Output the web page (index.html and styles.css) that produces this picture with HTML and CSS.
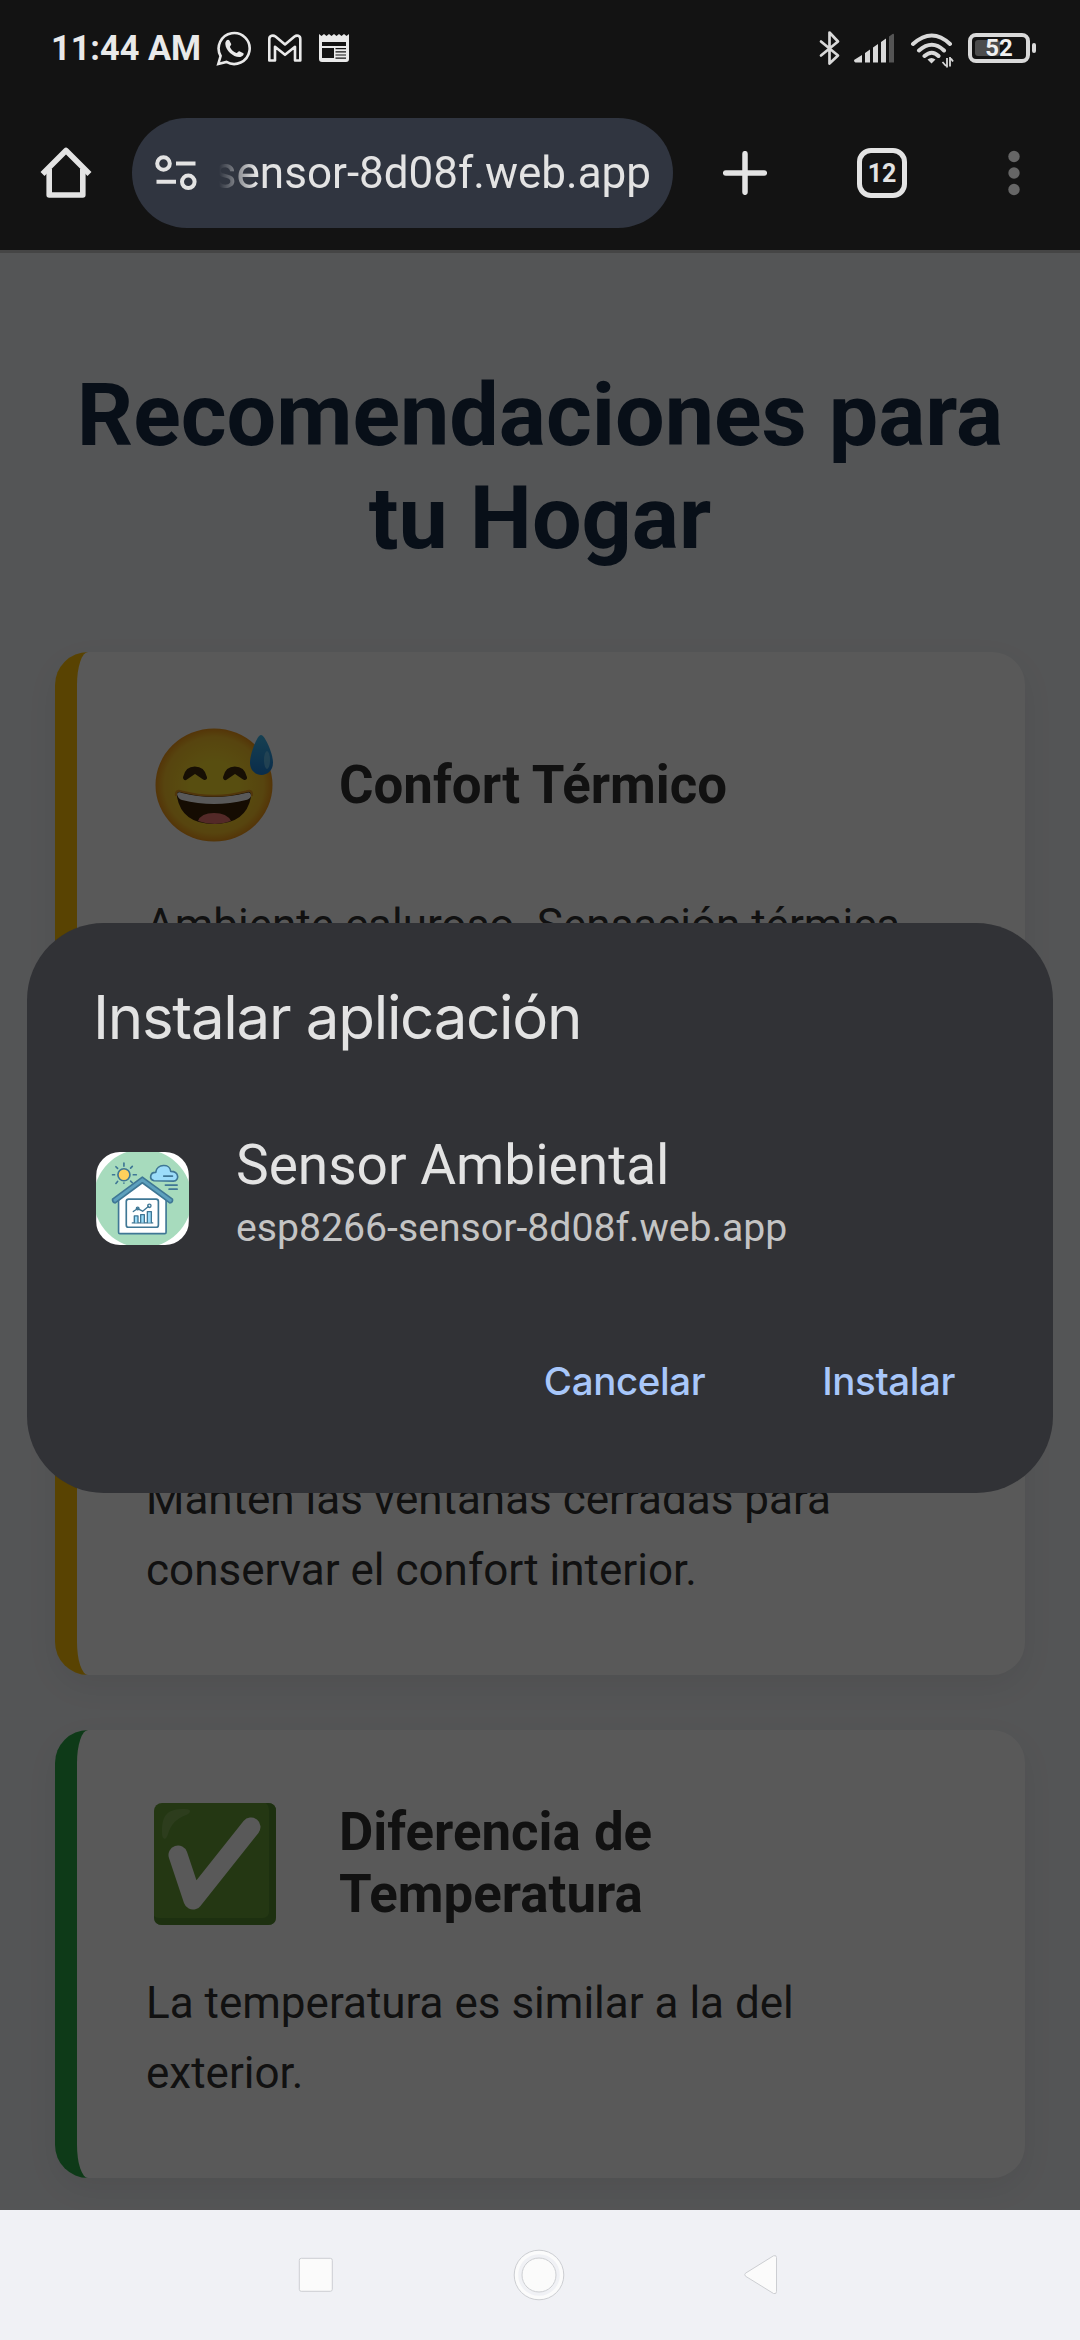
FILE: index.html
```html
<!DOCTYPE html>
<html lang="es">
<head>
<meta charset="utf-8">
<title>Sensor Ambiental</title>
<link rel="stylesheet" href="styles.css">
</head>
<body>
<header class="status-bar">
  <div class="status-left">
    <span class="clock">11:44 AM</span>
    <svg class="whatsapp" width="36" height="36" viewBox="0 0 36 36" fill="none" stroke="#e9e9e9" stroke-width="2.6"><path d="M2.3 34 4.6 26A15.5 15.5 0 1 1 10.4 31.9Z"/><path d="M9.3 14c-.4-3 2.6-5.5 3.9-3.800l2 3.800c.4 1-1.300 2-1.300 3 1.300 3 3.700 5 6.500 6 1 .200 2-2 3-1.700l4 2c1 1-.7 3.700-4.200 3.800C17 27 9.700 20.500 9.300 14Z" fill="#e9e9e9" stroke="none"/></svg>
    <svg class="gmail" width="36" height="28" viewBox="0 0 36 28" fill="none" stroke="#e9e9e9" stroke-width="2.600" stroke-linejoin="round"><path d="M3 26.500h5V12.800l10 8 10-8v13.700h5.300V5c0-3.500-3.500-4.200-5.800-2.500L18 10.500 8.500 2.500C6.200.8 2.300 1.500 2.300 5v21.500Z"/></svg>
    <svg class="news" width="30" height="28" viewBox="0 0 30 28"><path fill="#e9e9e9" fill-rule="evenodd" d="M0 0 2.500 2 5 0 7.500 2 10 0l2.500 2L15 0l2.500 2L20 0l2.500 2L25 0l2.500 2L30 0v25q0 3-3 3H3q-3 0-3-3ZM3 8v4h24V8ZM3 14v10h12V14ZM16.500 14v1.200H27V14Zm0 3.200v1.200H27v-1.200Zm0 3.200v1.200H27v-1.200Zm0 3.200v1.200H27v-1.200Z"/></svg>
  </div>
  <div class="status-right">
    <svg width="22" height="36" viewBox="0 0 22 36" fill="none" stroke="#d9d9d9" stroke-width="2.700" stroke-linecap="round" stroke-linejoin="round"><path d="M2 11.500 19 25.500 10.500 33.500V2.500L19 11.500 2 25.500"/></svg>
    <svg class="signal" width="41" height="30" viewBox="0 0 41 30" fill="#d9d9d9"><path d="M0 27 8 22v7.500H1.500Q0 29 0 27ZM11 20l5-3.500v13h-5ZM19 14.500l5-3.500v18.500h-5ZM27 9l5-3.500v24h-5Z"/><path fill="#555" d="M35 3.500 38.500 1Q40 0 40 2v27.500h-5Z"/></svg>
    <svg class="wifi" width="44" height="36" viewBox="0 0 44 36" fill="none" stroke="#d9d9d9" stroke-width="4" stroke-linecap="round"><path d="M3 12Q22-5 40 12M9 18.500Q22 7 34 18.500M14.500 24Q22 17.500 28.500 24"/><path d="M17.500 27.500Q21.500 24.500 25.500 27.500L21.500 31.500Z" fill="#d9d9d9" stroke="none"/><path d="M37 26v9.500M36 34l-3.500-4M40 25v9.500M41 26.500l2 3" stroke-width="1.800" stroke-linecap="butt"/></svg>
    <div class="battery"><div class="battery-body"><span class="battery-fill"></span><span class="battery-text">52</span></div><span class="battery-tip"></span></div>
  </div>
</header>
<nav class="toolbar">
  <svg class="home" width="52" height="52" viewBox="0 0 52 52" fill="none" stroke="#e3e3e3" stroke-width="5.600" stroke-linecap="butt" stroke-linejoin="round"><path d="M2.500 27 26 3.500 49.500 27"/><path d="M9.200 22V48H42.800V22"/></svg>
  <div class="address">
    <svg width="42" height="36" viewBox="0 0 42 36" fill="none" stroke="#e3e3e3" stroke-width="4"><circle cx="8.500" cy="8.500" r="6.300"/><circle cx="33.300" cy="26.800" r="6.300"/><path d="M21 8.600H40.500M1.500 26.700H21"/></svg>
    <span class="url">sensor-8d08f.web.app</span>
  </div>
  <svg class="plus" width="44" height="44" viewBox="0 0 44 44" stroke="#e3e3e3" stroke-width="5.500" stroke-linecap="round"><path d="M22 2.700V41.300M2.700 22H41.300"/></svg>
  <span class="tabs">12</span>
  <svg class="more" width="12" height="46" viewBox="0 0 12 46" fill="#666"><circle cx="6" cy="6.500" r="5.700"/><circle cx="6" cy="23" r="5.700"/><circle cx="6" cy="39.500" r="5.700"/></svg>
</nav>
<main class="viewport">
  <div class="page">
    <h1 class="heading">Recomendaciones para tu Hogar</h1>
    <section class="card card-warn">
      <div class="card-head">
        <svg class="emoji" width="128" height="128" viewBox="0 0 128 128">
          <defs>
            <radialGradient id="face"><stop offset="0.400" stop-color="#fde030"/><stop offset="0.850" stop-color="#f9c42b"/><stop offset="1" stop-color="#f09819"/></radialGradient>
            <linearGradient id="drop" x2="0" y2="1"><stop stop-color="#40b8ea"/><stop offset="1" stop-color="#1d7fd6"/></linearGradient>
          </defs>
          <ellipse cx="65" cy="64" rx="58.500" ry="56.500" fill="url(#face)"/>
          <path d="M36.500 56.500C38 50 42 48 45.800 48S54 50 55.500 56.500L46 50ZM76.500 56.500C78 50 82 48 85.800 48S94 50 95.500 56.500L86 50Z" fill="#422b0d" stroke="#422b0d" stroke-width="5" stroke-linejoin="round"/>
          <path d="M31 70Q65 80 98 70Q103 70 102 76Q97 103 65 103T28 76Q27 70 31 70Z" fill="#3c2308"/>
          <path d="M49 100Q52 92 65 92T82 100Q66 106 49 100Z" fill="#ed7770"/>
          <path d="M28 73Q29 70 33 72Q65 80 97 72Q102 70 102 75Q101 78 97 79Q65 87 33 79Q29 78 28 73Z" fill="#fff"/>
          <path d="M27 75Q26 68 33 70.500Q65 79 97 70.500Q104 68 103 75" fill="none" stroke="#e89b21" stroke-width="2"/>
          <path d="M112 14C108 14 101 33 101 41.500C101 58 124 58 124 41.500C124 33 116 14 112 14Z" fill="url(#drop)"/>
          <ellipse cx="118" cy="39" rx="3" ry="9" fill="#78cdf2" opacity=".7"/>
        </svg>
        <h2 class="card-title">Confort Térmico</h2>
      </div>
      <p class="text">Ambiente caluroso. Sensación térmica</p>
      <p class="text advice">Mantén las ventanas cerradas para conservar el confort interior.</p>
    </section>
    <section class="card card-ok">
      <div class="card-head">
        <svg class="emoji" width="128" height="128" viewBox="0 0 128 128"><rect x="5" y="4" width="122" height="122" rx="8" fill="#689f38"/><path d="M117 4h2q8 0 8 8v106q0 8-8 8H13q-8 0-8-8v-1q2 2 6 2h102q7 0 7-7V11q0-4-3-7Z" fill="#558b2f"/><path d="M29 56 44 101 102 28" fill="none" stroke="#fff" stroke-width="19" stroke-linecap="round" stroke-linejoin="round"/><path d="M13 33C13 15 19 10 36 10c7 0 6 4 1 6-10 4-15 9-18 19-2 7-6 6-6-2Z" fill="#8db764" opacity=".65"/></svg>
        <h2 class="card-title">Diferencia de Temperatura</h2>
      </div>
      <p class="text">La temperatura es similar a la del exterior.</p>
    </section>
  </div>
  <div class="scrim">
    <div class="dialog" role="dialog">
      <h3 class="dialog-title">Instalar aplicación</h3>
      <div class="app">
        <svg class="app-icon" width="93" height="93" viewBox="49 66 277 278" fill="none" stroke="#3f7795" stroke-width="5" stroke-linecap="round" stroke-linejoin="round">
          <rect x="49" y="66" width="277" height="278" fill="#fff" stroke="none"/><circle cx="188" cy="205" r="147" fill="#a7dbbd" stroke="none"/>
          <circle cx="132" cy="134" r="18" fill="#ffd05c"/><path d="M132 99v9M132 159v0M98 134h6M160 134h9M108 110l5 5M157 109l-5 5M108 160l5-6M152 153l5 5"/>
          <path d="M222 152c-16-4-12-26 5-25 3-26 43-28 45-3 26 0 26 29 8 29Z" fill="#9cddfa"/><path d="M251 138h26M256 165h35M267 177h24"/>
          <path d="M116 208 187 149 258 208V306q0 4-4 4H120q-4 0-4-4Z" fill="#fff"/>
          <path d="M187 141 98 207q-1 10 8 11L187 158 269 218q10-1 8-11Z" fill="#5da0bd"/>
          <rect x="139" y="207" width="96" height="84" rx="7" fill="#fff"/>
          <path d="M157 278h61" stroke-width="4"/><path d="M163 277v-20h11v20M182 277v-24h11v24M202 277v-33h12v33" fill="#9cddfa" stroke-width="4"/><path d="m160 244 13-9 15 8 18-15" stroke-width="4"/><circle cx="173" cy="235" r="4" stroke-width="4"/><circle cx="208" cy="227" r="5" stroke-width="4"/>
        </svg>
        <div class="app-info"><span class="app-name">Sensor Ambiental</span><span class="app-url">esp8266-sensor-8d08f.web.app</span></div>
      </div>
      <div class="actions"><span class="action cancel">Cancelar</span><span class="action install">Instalar</span></div>
    </div>
  </div>
</main>
<footer class="system-nav">
  <svg width="36" height="36" viewBox="0 0 36 36"><rect x="1.300" y="1.300" width="33" height="33" rx="2" fill="#fbfbfb" stroke="#ccced2"/></svg>
  <svg width="52" height="52" viewBox="0 0 52 52" stroke="#ccced2"><circle cx="26" cy="26" r="24.800" fill="#fbfbfb"/><circle cx="26" cy="26" r="19" fill="none" stroke="#f0f1f5" stroke-width="3.500"/><circle cx="26" cy="26" r="17" fill="#fbfbfb"/></svg>
  <svg width="34" height="42" viewBox="0 0 34 42"><path d="M1.500 19.200 29.500 1.800Q32.500.8 32.500 3.500V37.500Q32.500 40.500 29.500 39.500L1.500 22.200Q0 20.700 1.500 19.200Z" fill="#fbfbfb" stroke="#ccced2"/></svg>
</footer>
</body>
</html>
```
FILE: styles.css
```css
* { box-sizing: border-box; }
body {
  margin: 0;
  width: 1080px;
  height: 2340px;
  overflow: hidden;
  display: flex;
  flex-direction: column;
  background: #131313;
  font-family: Roboto, "Liberation Sans", sans-serif;
}
h1, h2, h3, p { margin: 0; }
svg { display: block; flex: none; }

.status-bar {
  height: 96px;
  padding: 0 44px 0 51px;
  display: flex;
  justify-content: space-between;
  align-items: center;
}
.status-left, .status-right { display: flex; align-items: center; }
.clock { width: 165px; font-size: 34.3px; font-weight: 700; line-height: 40px; color: #e9e9e9; white-space: nowrap; }
.gmail { margin-left: 15px; }
.news { margin-left: 16px; }
.signal { margin-left: 13px; }
.wifi { margin: 3px 0 0 15px; }
.battery { display: flex; align-items: center; gap: 2px; margin-left: 14px; }
.battery-body {
  width: 62px; height: 30px;
  border: 4px solid #d9d9d9;
  border-radius: 8px;
  padding: 3px;
  display: grid;
  align-items: center;
}
.battery-fill, .battery-text { grid-area: 1 / 1; }
.battery-fill { width: 25px; height: 16px; border-radius: 3px; background: #4c4c4c; }
.battery-text { font-size: 24px; line-height: 16px; font-weight: 700; color: #f0f0f0; text-align: center; }
.battery-tip { width: 4px; height: 10px; border-radius: 2px; background: #d9d9d9; }

.toolbar { height: 154px; padding: 0 60px 0 40px; display: flex; align-items: center; }
.address {
  width: 541px; height: 110px;
  margin-left: 40px;
  padding: 0 22px 0 23px;
  border-radius: 55px;
  background: #303540;
  display: flex;
  align-items: center;
  justify-content: space-between;
}
.url {
  font-size: 44px; line-height: 52px;
  color: #e3e3e3;
  white-space: nowrap;
  mask-image: linear-gradient(to right, transparent 5px, #000 42px);
}
.plus { margin-left: 50px; }
.tabs {
  width: 50px; height: 50px;
  margin-left: 90px;
  border: 5.5px solid #e3e3e3;
  border-radius: 14px;
  font-size: 25px; font-weight: 700; line-height: 41px;
  text-align: center;
  color: #e3e3e3;
}
.more { margin-left: 101px; }

.viewport { height: 1960px; position: relative; overflow: hidden; background: #f0f2f5; }
.page { padding: 113px 55px 0; }
.heading { font-size: 88px; line-height: 103px; font-weight: 700; color: #172b45; text-align: center; margin: 0 0 83px; }
.card {
  border-left: 22px solid;
  border-radius: 33px;
  background: #fff;
  padding: 69px;
  box-shadow: 0 11px 33px rgba(0, 0, 0, .06);
  color: #333;
}
.card-warn { border-color: #ffc107; height: 1023px; }
.card-ok { border-color: #28a745; height: 448px; margin-top: 55px; }
.card-head { display: flex; align-items: center; gap: 62px; height: 128px; margin-bottom: 41px; }
.emoji { margin-left: 3px; }
.card-title { font-size: 52.8px; line-height: 62px; font-weight: 700; }
.text { font-size: 44px; line-height: 70.4px; }
.advice { margin-top: 504px; }

.scrim {
  position: absolute;
  inset: 0;
  padding: 673px 27px 0;
  background: rgba(0, 0, 0, .65);
  box-shadow: inset 0 3px #454545;
}
.dialog { height: 570px; padding: 59px 67px 60px; border-radius: 77px; background: #313236; color: #e3e3e3; }
.dialog-title { font: 400 60px/70px Inter, Roboto, sans-serif; letter-spacing: -1.3px; margin-left: -1px; }
.app { display: flex; align-items: center; gap: 47px; margin: 91px 0 0 2px; height: 110px; }
.app-icon { border-radius: 24px; }
.app-info { display: flex; flex-direction: column; padding-bottom: 5px; }
.app-name { font-size: 55px; line-height: 64px; }
.app-url { font-size: 39.2px; line-height: 62px; color: #c4c4c4; }
.actions { display: flex; justify-content: flex-end; gap: 117px; padding-right: 31px; margin-top: 105px; }
.action { font: 500 38.5px/46px Inter, Roboto, sans-serif; letter-spacing: -.4px; color: #a8c7fa; }

.system-nav { height: 130px; padding: 0 302px 0 298px; background: #f0f1f5; display: flex; justify-content: space-between; align-items: center; }
```
